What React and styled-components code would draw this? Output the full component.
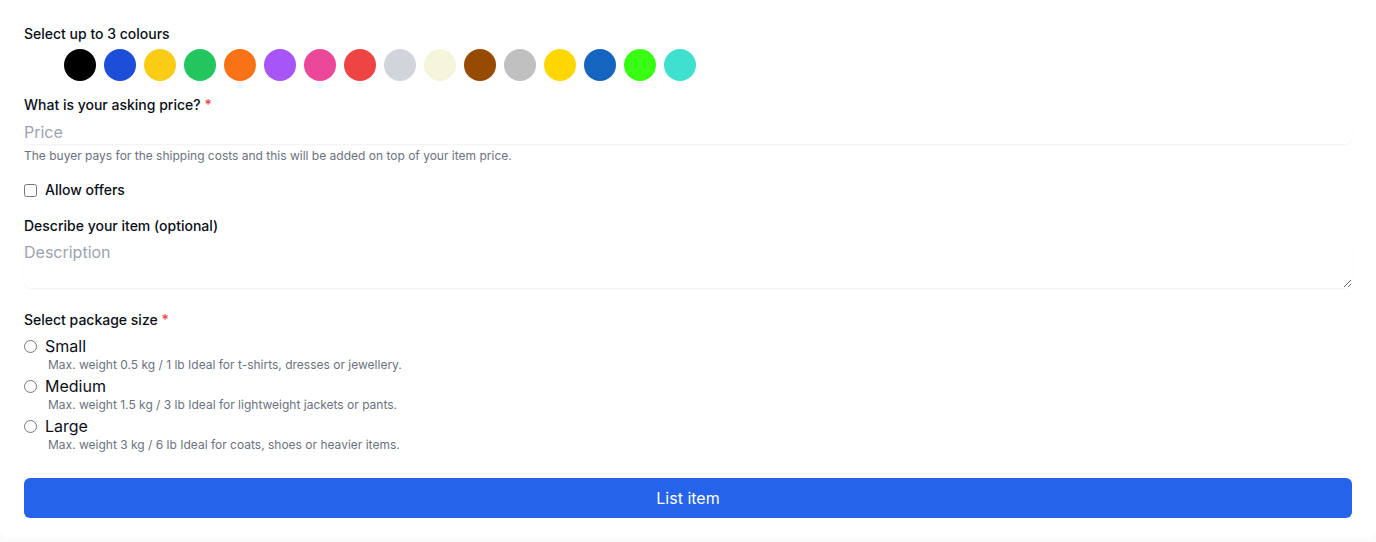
import React, { useState } from "react";
import styled, { createGlobalStyle } from "styled-components";

const GlobalStyle = createGlobalStyle`
  html, body {
    margin: 0;
    padding: 0;
    background: #fbfbfc;
  }
  * { box-sizing: border-box; }
  body {
    font-family: Inter, "Liberation Sans", sans-serif;
    color: #111827;
  }
`;

const COLOURS = [
  "#ffffff", "#000000", "#1d4ed8", "#facc15", "#22c55e", "#f97316",
  "#a855f7", "#ec4899", "#ef4444", "#d1d5db", "#f5f5dc", "#964b00",
  "#c0c0c0", "#ffd700", "#1565c0", "#39ff14", "#40e0d0",
];

const SIZES = [
  { id: "small", name: "Small", desc: "Max. weight 0.5 kg / 1 lb Ideal for t-shirts, dresses or jewellery." },
  { id: "medium", name: "Medium", desc: "Max. weight 1.5 kg / 3 lb Ideal for lightweight jackets or pants." },
  { id: "large", name: "Large", desc: "Max. weight 3 kg / 6 lb Ideal for coats, shoes or heavier items." },
];

const App = () => {
  const [picked, setPicked] = useState([]);
  const [size, setSize] = useState(null);

  const toggle = (c) => {
    setPicked((p) => p.includes(c) ? p.filter(x => x !== c) : p.length < 3 ? [...p, c] : p);
  };

  return (
    <>
      <GlobalStyle />
      <Card>
        <Field>
          <Label>Select up to 3 colours</Label>
          <Swatches>
            {COLOURS.map(c => (
              <Swatch key={c} colour={c} active={picked.includes(c)} onClick={() => toggle(c)} />
            ))}
          </Swatches>
        </Field>

        <Field>
          <Label>What is your asking price? <Req>*</Req></Label>
          <Input placeholder="Price" />
          <Help>The buyer pays for the shipping costs and this will be added on top of your item price.</Help>
        </Field>

        <CheckRow>
          <input type="checkbox" id="offers" />
          <Label as="label" htmlFor="offers">Allow offers</Label>
        </CheckRow>

        <Field>
          <Label>Describe your item (optional)</Label>
          <TextArea placeholder="Description" rows={2} />
        </Field>

        <Field>
          <Label>Select package size <Req>*</Req></Label>
          <Options>
            {SIZES.map(s => (
              <Option key={s.id}>
                <OptionHead>
                  <input type="radio" name="size" id={s.id} checked={size === s.id} onChange={() => setSize(s.id)} />
                  <OptionName htmlFor={s.id}>{s.name}</OptionName>
                </OptionHead>
                <OptionDesc>{s.desc}</OptionDesc>
              </Option>
            ))}
          </Options>
        </Field>

        <Submit type="button">List item</Submit>
      </Card>
    </>
  );
};

const Card = styled.div`
  background: #fff;
  border-radius: 0 0 8px 8px;
  padding: 24px 24px 20px;
  margin-bottom: 4px;
  display: flex;
  flex-direction: column;
`;

const Field = styled.div`
  display: flex;
  flex-direction: column;
  margin-bottom: 14px;
`;

const Label = styled.div`
  font-size: 14px;
  line-height: 20px;
  font-weight: 500;
  color: #0b0f19;
`;

const Req = styled.span`
  color: #ef4444;
`;

const Swatches = styled.div`
  display: flex;
  gap: 8px;
  margin-top: 5px;
`;

const Swatch = styled.button`
  width: 32px;
  height: 32px;
  border-radius: 50%;
  border: none;
  padding: 0;
  margin: 0;
  cursor: pointer;
  background: ${props => props.colour};
  outline: ${props => props.active ? "2px solid #2563eb" : "none"};
  outline-offset: 2px;
`;

const Input = styled.input`
  margin-top: 5px;
  border: none;
  border-radius: 6px;
  padding: 0;
  height: 24px;
  font-family: inherit;
  font-size: 16px;
  line-height: 24px;
  color: #111827;
  box-shadow: 0 1px 2px 0 rgba(0, 0, 0, 0.06);
  outline: none;
  &::placeholder { color: #9ca3af; }
`;

const Help = styled.p`
  margin: 4px 0 0;
  font-size: 12px;
  line-height: 16px;
  color: #6b7280;
`;

const CheckRow = styled.div`
  display: flex;
  align-items: center;
  gap: 8px;
  margin: 2px 0 16px;
  height: 20px;
  & input {
    margin: 0;
    width: 13px;
    height: 13px;
  }
`;

const TextArea = styled.textarea`
  margin-top: 4px;
  border: none;
  border-radius: 6px;
  padding: 0;
  height: 48px;
  font-family: inherit;
  font-size: 16px;
  line-height: 24px;
  color: #111827;
  box-shadow: 0 1px 2px 0 rgba(0, 0, 0, 0.06);
  outline: none;
  resize: vertical;
  margin-bottom: 8px;
  &::placeholder { color: #9ca3af; }
`;

const Options = styled.div`
  display: flex;
  flex-direction: column;
  margin-top: 4px;
`;

const Option = styled.div`
  display: flex;
  flex-direction: column;
`;

const OptionHead = styled.div`
  display: flex;
  align-items: center;
  gap: 8px;
  height: 24px;
  & input {
    margin: 0;
    width: 13px;
    height: 13px;
  }
`;

const OptionName = styled.label`
  font-size: 16px;
  line-height: 24px;
  color: #0b0f19;
`;

const OptionDesc = styled.p`
  margin: -1px 0 1px 24px;
  font-size: 12px;
  line-height: 16px;
  color: #6b7280;
`;

const Submit = styled.button`
  margin-top: 10px;
  height: 40px;
  width: 100%;
  border: none;
  border-radius: 6px;
  background: #2563eb;
  color: #fff;
  font-family: inherit;
  font-size: 16px;
  line-height: 24px;
  cursor: pointer;
`;

export default App;
